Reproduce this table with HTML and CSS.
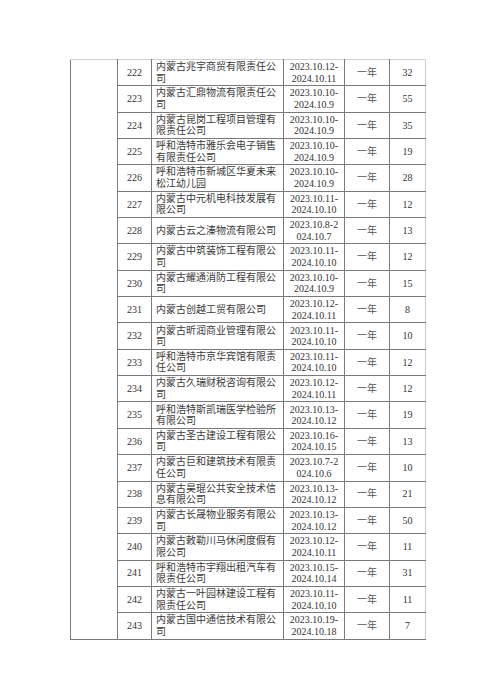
FILE: index.html
```html
<!DOCTYPE html>
<html lang="zh-CN">
<head>
<meta charset="utf-8">
<title>名单</title>
<link rel="stylesheet" href="styles.css">
</head>
<body>
<div class="page">
<table class="list">
<colgroup>
<col class="c-blank"><col class="c-no"><col class="c-name"><col class="c-date"><col class="c-term"><col class="c-count">
</colgroup>
<tbody>
<tr><td class="blank" rowspan="22"></td><td>222</td><td class="name">内蒙古兆宇商贸有限责任公司</td><td class="date">2023.10.12-2024.10.11</td><td class="term">一年</td><td class="count">32</td></tr>
<tr><td>223</td><td class="name">内蒙古汇鼎物流有限责任公司</td><td class="date">2023.10.10-2024.10.9</td><td class="term">一年</td><td class="count">55</td></tr>
<tr><td>224</td><td class="name">内蒙古昆岗工程项目管理有限责任公司</td><td class="date">2023.10.10-2024.10.9</td><td class="term">一年</td><td class="count">35</td></tr>
<tr><td>225</td><td class="name">呼和浩特市雅乐会电子销售有限责任公司</td><td class="date">2023.10.10-2024.10.9</td><td class="term">一年</td><td class="count">19</td></tr>
<tr><td>226</td><td class="name">呼和浩特市新城区华夏未来松江幼儿园</td><td class="date">2023.10.10-2024.10.9</td><td class="term">一年</td><td class="count">28</td></tr>
<tr><td>227</td><td class="name">内蒙古中元机电科技发展有限公司</td><td class="date">2023.10.11-2024.10.10</td><td class="term">一年</td><td class="count">12</td></tr>
<tr><td>228</td><td class="name">内蒙古云之溱物流有限公司</td><td class="date">2023.10.8-2024.10.7</td><td class="term">一年</td><td class="count">13</td></tr>
<tr><td>229</td><td class="name">内蒙古中筑装饰工程有限公司</td><td class="date">2023.10.11-2024.10.10</td><td class="term">一年</td><td class="count">12</td></tr>
<tr><td>230</td><td class="name">内蒙古耀通消防工程有限公司</td><td class="date">2023.10.10-2024.10.9</td><td class="term">一年</td><td class="count">15</td></tr>
<tr><td>231</td><td class="name">内蒙古创越工贸有限公司</td><td class="date">2023.10.12-2024.10.11</td><td class="term">一年</td><td class="count">8</td></tr>
<tr><td>232</td><td class="name">内蒙古昕润商业管理有限公司</td><td class="date">2023.10.11-2024.10.10</td><td class="term">一年</td><td class="count">10</td></tr>
<tr><td>233</td><td class="name">呼和浩特市京华宾馆有限责任公司</td><td class="date">2023.10.11-2024.10.10</td><td class="term">一年</td><td class="count">12</td></tr>
<tr><td>234</td><td class="name">内蒙古久瑞财税咨询有限公司</td><td class="date">2023.10.12-2024.10.11</td><td class="term">一年</td><td class="count">12</td></tr>
<tr><td>235</td><td class="name">呼和浩特斯凯瑞医学检验所有限公司</td><td class="date">2023.10.13-2024.10.12</td><td class="term">一年</td><td class="count">19</td></tr>
<tr><td>236</td><td class="name">内蒙古圣古建设工程有限公司</td><td class="date">2023.10.16-2024.10.15</td><td class="term">一年</td><td class="count">13</td></tr>
<tr><td>237</td><td class="name">内蒙古巨和建筑技术有限责任公司</td><td class="date">2023.10.7-2024.10.6</td><td class="term">一年</td><td class="count">10</td></tr>
<tr><td>238</td><td class="name">内蒙古昊琨公共安全技术信息有限公司</td><td class="date">2023.10.13-2024.10.12</td><td class="term">一年</td><td class="count">21</td></tr>
<tr><td>239</td><td class="name">内蒙古长晟物业服务有限公司</td><td class="date">2023.10.13-2024.10.12</td><td class="term">一年</td><td class="count">50</td></tr>
<tr><td>240</td><td class="name">内蒙古敕勒川马休闲度假有限公司</td><td class="date">2023.10.12-2024.10.11</td><td class="term">一年</td><td class="count">11</td></tr>
<tr><td>241</td><td class="name">呼和浩特市宇翔出租汽车有限责任公司</td><td class="date">2023.10.15-2024.10.14</td><td class="term">一年</td><td class="count">31</td></tr>
<tr><td>242</td><td class="name">内蒙古一叶园林建设工程有限责任公司</td><td class="date">2023.10.11-2024.10.10</td><td class="term">一年</td><td class="count">11</td></tr>
<tr><td>243</td><td class="name">内蒙古国中通信技术有限公司</td><td class="date">2023.10.19-2024.10.18</td><td class="term">一年</td><td class="count">7</td></tr>
</tbody>
</table>
</div>
</body>
</html>
```

FILE: styles.css
```css
html, body {
  margin: 0;
  padding: 0;
  background: #ffffff;
}

.page {
  padding: 59px 0 0 70px;
}

.list {
  border-collapse: collapse;
  table-layout: fixed;
  width: 355px;
  font-family: "Liberation Serif", "Noto Sans CJK SC", serif;
  font-size: 10px;
  line-height: 11.6px;
  color: #333333;
  border-top: 1px solid #cfcfcf;
  border-right: 1px solid #cfcfcf;
}

.c-blank { width: 47px; }
.c-no { width: 34px; }
.c-name { width: 132px; }
.c-date { width: 61px; }
.c-term { width: 45px; }
.c-count { width: 36px; }

.list tr {
  height: 26.35px;
}

.list td {
  border: 1px solid #7a7a7a;
  padding: 0 4px;
  text-align: center;
  vertical-align: middle;
}

.list tr:first-child td {
  border-top-color: #cfcfcf;
}

.list td.count {
  border-right-color: #cfcfcf;
}

.list td.name {
  text-align: left;
  padding: 0 3px 0 4px;
  color: #3a3a3a;
}

.list td.date {
  word-break: break-all;
}

.list td.term {
  color: #555555;
}
```
